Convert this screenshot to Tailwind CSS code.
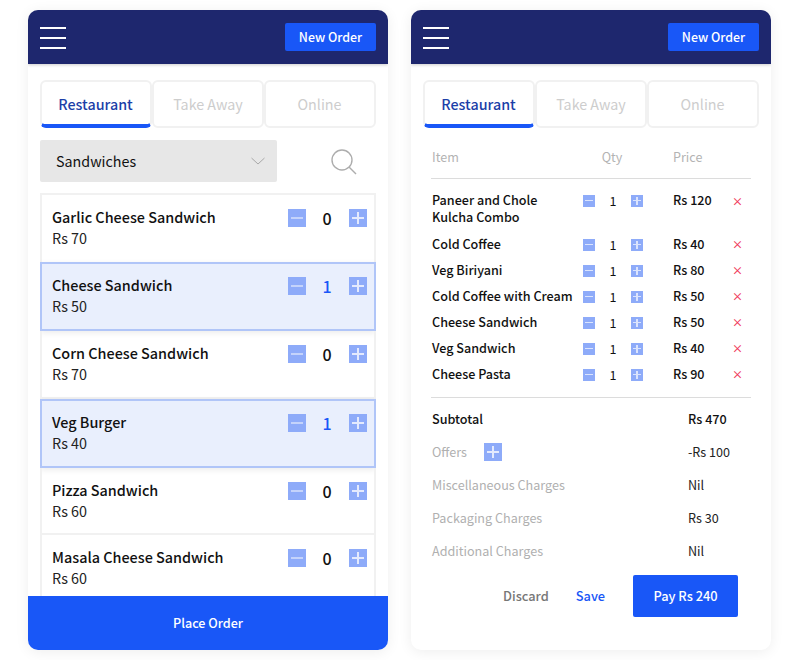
<!DOCTYPE html>
<html lang="en">

<head>
    <meta charset="UTF-8">
    <meta name="viewport" content="width=device-width, initial-scale=1.0">
    <title>Orders</title>
    <script src="https://cdn.jsdelivr.net/npm/@tailwindcss/browser@4"></script>
</head>

<body class="bg-white font-['Noto_Sans_CJK_JP','Noto_Sans',sans-serif] text-[#111]">
    <div class="w-[800px] h-[660px] overflow-hidden flex gap-[23px] pl-[28px] pt-[10px]">

        <!-- Left card: menu -->
        <section class="w-[360px] h-[640px] rounded-[10px] overflow-hidden bg-white shadow-[0_2px_14px_rgba(0,0,0,0.07)] flex flex-col">
            <header class="h-[54px] shrink-0 bg-[#1e276e] flex items-center justify-between px-[12px] shadow-[0_1px_3px_rgba(0,0,0,0.2)]">
                <div class="w-[26px] flex flex-col gap-[8px] mt-[2px]">
                    <div class="h-[2px] bg-white"></div>
                    <div class="h-[2px] bg-white"></div>
                    <div class="h-[2px] bg-white"></div>
                </div>
                <button class="w-[91px] h-[28px] rounded-[2px] bg-[#1957f7] text-white text-[12.4px] font-medium leading-none">New Order</button>
            </header>

            <div class="px-[12px] pt-[16px] flex shrink-0 text-[14.3px]">
                <div class="w-[112px] h-[48px] rounded-[6px] border-x-2 border-t-2 border-b-4 border-x-[#f1f1f1] border-t-[#f1f1f1] border-b-[#1957f7] pt-[2px] pr-[1px] flex items-center justify-center font-medium text-[#1c3fa8]">Restaurant</div>
                <div class="w-[112px] h-[48px] rounded-[6px] border-2 border-[#f1f1f1] flex items-center justify-center text-[#cdcdcd]">Take Away</div>
                <div class="w-[112px] h-[48px] rounded-[6px] border-2 border-[#f1f1f1] pr-[1px] flex items-center justify-center text-[#cdcdcd]">Online</div>
            </div>

            <div class="px-[12px] mt-[12px] flex items-center shrink-0">
                <div class="w-[237px] h-[42px] rounded-[2px] bg-[#e7e7e7] flex items-center justify-between pl-[16px] pr-[12px] text-[14.3px]">
                    <span>Sandwiches</span>
                    <svg width="14" height="8" viewBox="0 0 14 8" fill="none" stroke="#a8a8a8" stroke-width="1"><path d="M0.5 1l6.5 6 6.5-6" /></svg>
                </div>
                <svg class="ml-[54px] mt-[2px]" width="26" height="26" viewBox="0 0 26 26" fill="none" stroke="#adadad" stroke-width="1.4"><circle cx="11" cy="11" r="10" /><path d="M18 18l7 7" /></svg>
            </div>

            <div id="menu-list" class="mx-[12px] mt-[11px] flex-1 min-h-0 overflow-hidden"></div>

            <button class="h-[54px] shrink-0 bg-[#1957f7] text-white text-[12.6px] font-medium">Place Order</button>
        </section>

        <!-- Right card: bill -->
        <section class="w-[360px] h-[640px] rounded-[10px] overflow-hidden bg-white shadow-[0_2px_14px_rgba(0,0,0,0.07)] flex flex-col">
            <header class="h-[54px] shrink-0 bg-[#1e276e] flex items-center justify-between px-[12px] shadow-[0_1px_3px_rgba(0,0,0,0.2)]">
                <div class="w-[26px] flex flex-col gap-[8px] mt-[2px]">
                    <div class="h-[2px] bg-white"></div>
                    <div class="h-[2px] bg-white"></div>
                    <div class="h-[2px] bg-white"></div>
                </div>
                <button class="w-[91px] h-[28px] rounded-[2px] bg-[#1957f7] text-white text-[12.4px] font-medium leading-none">New Order</button>
            </header>

            <div class="px-[12px] pt-[16px] flex shrink-0 text-[14.3px]">
                <div class="w-[112px] h-[48px] rounded-[6px] border-x-2 border-t-2 border-b-4 border-x-[#f1f1f1] border-t-[#f1f1f1] border-b-[#1957f7] pt-[2px] pr-[1px] flex items-center justify-center font-medium text-[#1c3fa8]">Restaurant</div>
                <div class="w-[112px] h-[48px] rounded-[6px] border-2 border-[#f1f1f1] flex items-center justify-center text-[#cdcdcd]">Take Away</div>
                <div class="w-[112px] h-[48px] rounded-[6px] border-2 border-[#f1f1f1] pr-[1px] flex items-center justify-center text-[#cdcdcd]">Online</div>
            </div>

            <div class="mx-[20px] mt-[19px] pb-[11px] border-b border-[#dcdcdc] grid grid-cols-[150px_60px_auto] text-[12.6px] leading-[20px] text-[#b3b3b3] pl-[1px]">
                <span>Item</span>
                <span class="text-center">Qty</span>
                <span class="ml-[31px]">Price</span>
            </div>

            <div id="bill-list" class="mx-[21px] mt-[12px] flex flex-col gap-[9px] text-[12.6px] font-medium leading-[17px]"></div>

            <div class="mx-[20px] mt-[15px] border-t border-[#dcdcdc] pt-[11px] pl-[1px] flex flex-col gap-[13px] text-[12.6px] leading-[20px]">
                <div class="flex font-medium"><span class="w-[256px]">Subtotal</span><span>Rs 470</span></div>
                <div class="flex"><span class="w-[256px] flex items-center text-[#b0b0b0]">Offers<i class="ml-[17px] w-[18px] h-[18px] bg-[#8eabf9] flex items-center justify-center relative"><b class="w-[12px] h-[1.5px] bg-[#e4eafd]"></b><b class="absolute w-[1.5px] h-[12px] bg-[#e4eafd]"></b></i></span><span class="text-[#222]">-Rs 100</span></div>
                <div class="flex"><span class="w-[256px] text-[#b0b0b0]">Miscellaneous Charges</span><span class="text-[#222]">Nil</span></div>
                <div class="flex"><span class="w-[256px] text-[#b0b0b0]">Packaging Charges</span><span class="text-[#222]">Rs 30</span></div>
                <div class="flex"><span class="w-[256px] text-[#b0b0b0]">Additional Charges</span><span class="text-[#222]">Nil</span></div>
            </div>

            <div class="mt-[14px] flex items-center text-[12.8px] font-medium">
                <span class="ml-[92px] text-[#777]">Discard</span>
                <span class="ml-[27px] text-[#1957f7]">Save</span>
                <button class="ml-[28px] w-[105px] h-[42px] rounded-[2px] bg-[#1957f7] text-white font-medium">Pay Rs 240</button>
            </div>
        </section>
    </div>

    <script>
        const menuItems = [
            { name: "Garlic Cheese Sandwich", price: "Rs 70", qty: 0, box: "h-[69px] border-x-2 border-t-2 border-[#f1f1f1] pt-[12px]" },
            { name: "Cheese Sandwich", price: "Rs 50", qty: 1, box: "h-[69px] border-2 border-[#b0c5f8] bg-[#e9effd] pt-[11px] shadow-[0_2px_6px_rgba(0,0,0,0.08)]" },
            { name: "Corn Cheese Sandwich", price: "Rs 70", qty: 0, box: "h-[68px] border-x-2 border-b-2 border-[#f1f1f1] pt-[12px]" },
            { name: "Veg Burger", price: "Rs 40", qty: 1, box: "h-[69px] border-2 border-[#b0c5f8] bg-[#e9effd] pt-[11px] shadow-[0_2px_6px_rgba(0,0,0,0.08)]" },
            { name: "Pizza Sandwich", price: "Rs 60", qty: 0, box: "h-[67px] border-x-2 border-b-2 border-[#f1f1f1] pt-[12px]" },
            { name: "Masala Cheese Sandwich", price: "Rs 60", qty: 0, box: "h-[67px] border-x-2 border-[#f1f1f1] pt-[12px]" },
        ];

        document.getElementById("menu-list").innerHTML = menuItems.map(item => `
            <div class="relative px-[10px] ${item.box}">
                <p class="text-[14.4px] font-medium leading-[20px]">${item.name}</p>
                <p class="text-[14.4px] leading-[20px] mt-[1px] text-[#222]">${item.price}</p>
                <div class="absolute right-[7px] ${item.qty ? "top-[13px]" : "top-[14px]"} flex items-center">
                    <span class="w-[18px] h-[18px] bg-[#8eabf9] flex items-center justify-center"><span class="w-[12px] h-[2px] bg-[#c4d3fb]"></span></span>
                    <span class="w-[43px] pr-[1px] text-center text-[16px] font-medium leading-[18px] ${item.qty ? "text-[#1957f7]" : ""}">${item.qty}</span>
                    <span class="w-[18px] h-[18px] bg-[#8eabf9] flex items-center justify-center relative"><span class="w-[12px] h-[1.5px] bg-[#e4eafd]"></span><span class="absolute w-[1.5px] h-[12px] bg-[#e4eafd]"></span></span>
                </div>
            </div>`).join("");

        const billItems = [
            ["Paneer and Chole Kulcha Combo", "Rs 120"],
            ["Cold Coffee", "Rs 40"],
            ["Veg Biriyani", "Rs 80"],
            ["Cold Coffee with Cream", "Rs 50"],
            ["Cheese Sandwich", "Rs 50"],
            ["Veg Sandwich", "Rs 40"],
            ["Cheese Pasta", "Rs 90"],
        ];

        document.getElementById("bill-list").innerHTML = billItems.map(([name, price], i) => `
            <div class="grid grid-cols-[151px_60px_64px_auto] items-start ${i === 0 ? "mb-[1px]" : ""}">
                <span class="${i === 0 ? "max-w-[125px]" : "whitespace-nowrap"}">${name}</span>
                <span class="translate-y-[1px] flex items-center justify-between font-normal"><i class="w-[12px] h-[12px] bg-[#8eabf9] flex items-center justify-center"><b class="w-[8px] h-[1.5px] bg-[#dbe4fd]"></b></i>1<i class="w-[12px] h-[12px] bg-[#8eabf9] flex items-center justify-center relative"><b class="w-[8px] h-[1.5px] bg-[#dbe4fd]"></b><b class="absolute w-[1.5px] h-[8px] bg-[#dbe4fd]"></b></i></span>
                <span class="ml-[30px] whitespace-nowrap">${price}</span>
                <span class="ml-[25px] ${i === 0 ? "translate-y-[2px]" : "translate-y-[1px]"} text-[11px] font-medium text-[#f0385a]">×</span>
            </div>`).join("");
    </script>
</body>

</html>
